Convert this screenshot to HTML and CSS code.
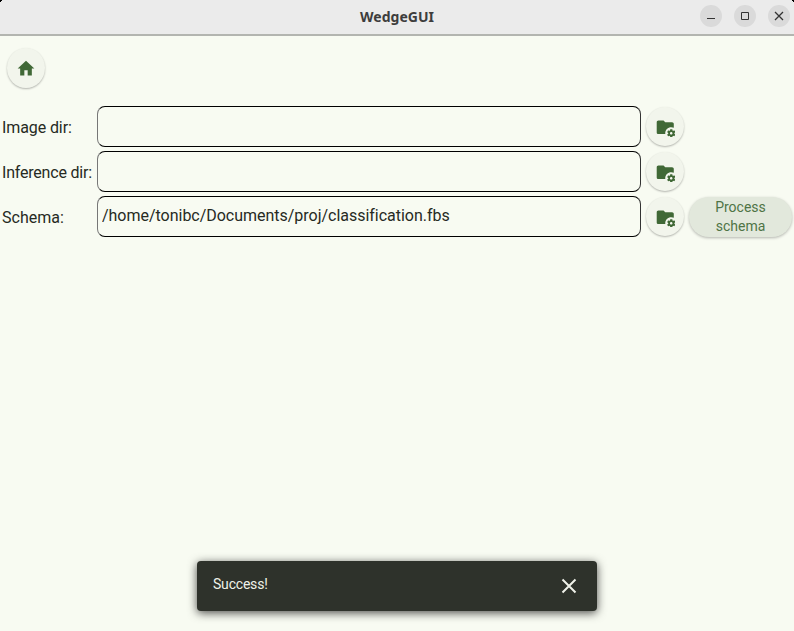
FILE: index.html
```html
<!DOCTYPE html>
<html lang="en">
<head>
<meta charset="utf-8">
<title>WedgeGUI</title>
<link rel="stylesheet" href="styles.css">
</head>
<body>
<svg width="0" height="0" class="defs" aria-hidden="true">
  <symbol id="folder-cog" viewBox="0 0 24 24"><path d="M23.8 20.4C23.9 20.4 23.9 20.5 23.8 20.6L22.8 22.3C22.7 22.4 22.6 22.4 22.5 22.4L21.3 22C21 22.2 20.8 22.3 20.5 22.5L20.3 23.8C20.3 23.9 20.2 24 20.1 24H18.1C18 24 17.9 23.9 17.8 23.8L17.6 22.5C17.3 22.4 17 22.2 16.8 22L15.6 22.5C15.5 22.5 15.4 22.5 15.3 22.4L14.3 20.7C14.2 20.6 14.3 20.5 14.4 20.4L15.5 19.6V18.6L14.4 17.8C14.3 17.7 14.3 17.6 14.3 17.5L15.3 15.8C15.4 15.7 15.5 15.7 15.6 15.7L16.8 16.2C17.1 16 17.3 15.9 17.6 15.7L17.8 14.4C17.8 14.3 17.9 14.2 18.1 14.2H20.1C20.2 14.2 20.3 14.3 20.3 14.4L20.5 15.7C20.8 15.8 21.1 16 21.4 16.2L22.6 15.7C22.7 15.7 22.9 15.7 22.9 15.8L23.9 17.5C24 17.6 23.9 17.7 23.8 17.8L22.7 18.6V19.6L23.8 20.4M20.5 19C20.5 18.2 19.8 17.5 19 17.5S17.5 18.2 17.5 19 18.2 20.5 19 20.5 20.5 19.8 20.5 19M12 19C12 15.1 15.1 12 19 12C20.1 12 21.1 12.2 22 12.7V8C22 6.9 21.1 6 20 6H12L10 4H4C2.9 4 2 4.9 2 6V18C2 19.1 2.9 20 4 20H12.1C12 19.7 12 19.3 12 19Z"/></symbol>
</svg>
<div class="window">
  <header class="titlebar">
    <h1 class="title">WedgeGUI</h1>
    <div class="controls">
      <button class="control" aria-label="Minimize"><svg viewBox="0 0 22 22"><path d="M7 13.5h8"/></svg></button>
      <button class="control" aria-label="Maximize"><svg viewBox="0 0 22 22"><path d="M7.5 7.5h7v7h-7z"/></svg></button>
      <button class="control" aria-label="Close"><svg viewBox="0 0 22 22"><path class="cross" d="M7 7l8 8M15 7l-8 8"/></svg></button>
    </div>
  </header>
  <nav class="toolbar">
    <button class="round" aria-label="Home"><svg class="home" viewBox="0 0 24 24" preserveAspectRatio="none"><path d="M10 20v-6h4v6h5v-8h3L12 3 2 12h3v8z"/></svg></button>
  </nav>
  <main class="form">
    <div class="row">
      <label class="label" for="image">Image dir:</label>
      <input class="field" id="image" type="text">
      <button class="round" aria-label="Browse"><svg class="folder"><use href="#folder-cog"/></svg></button>
    </div>
    <div class="row">
      <label class="label" for="inference">Inference dir:</label>
      <input class="field" id="inference" type="text">
      <button class="round" aria-label="Browse"><svg class="folder"><use href="#folder-cog"/></svg></button>
    </div>
    <div class="row">
      <label class="label" for="schema">Schema:</label>
      <input class="field" id="schema" type="text" value="/home/tonibc/Documents/proj/classification.fbs" spellcheck="false">
      <button class="round" aria-label="Browse"><svg class="folder"><use href="#folder-cog"/></svg></button>
      <button class="process">Process schema</button>
    </div>
  </main>
  <div class="snackbar" role="status">
    <span>Success!</span>
    <svg class="dismiss" viewBox="0 0 16 16"><path d="M1.5 1.5l13 13M14.5 1.5l-13 13"/></svg>
  </div>
</div>
</body>
</html>
```
FILE: styles.css
```css
* { box-sizing: border-box; }

body {
  margin: 0;
  background: #f8fbf2;
  color: #262a23;
  font-family: Roboto, sans-serif;
}

button { border: 0; padding: 0; font: inherit; }

.defs { display: block; }

.window {
  display: flex;
  flex-direction: column;
  height: 631px;
  overflow: hidden;
}

.titlebar {
  display: grid;
  grid-template-columns: 1fr auto 1fr;
  flex: none;
  height: 36px;
  padding: 0 4px;
  background:
    linear-gradient(135deg, #000 1.5px, transparent 1.5px),
    linear-gradient(225deg, #000 1.5px, transparent 1.5px),
    #ebebeb;
  border-bottom: 2px solid #b3b5b0;
}

.title {
  grid-column: 2;
  margin: 0;
  color: #3d3d3d;
  font: bold 14px/33px "Noto Sans", sans-serif;
}

.controls {
  display: flex;
  justify-content: flex-end;
  gap: 12px;
  padding-top: 5px;
}

.control {
  width: 22px;
  height: 22px;
  border-radius: 50%;
  background: #dadada;
}

.control svg {
  display: block;
  width: 22px;
  height: 22px;
  fill: none;
  stroke: #333;
  stroke-width: 1;
}

.control .cross { stroke-width: 1.3; }

.toolbar { padding: 12px 7px 18px; height: 70px; }

.round {
  display: flex;
  align-items: center;
  justify-content: center;
  flex: none;
  width: 38px;
  height: 40px;
  border-radius: 50%;
  background: #f2f5ec;
  box-shadow: 0 1px 2px rgba(0, 0, 0, .28);
}

.round svg { fill: #406836; }

.home { width: 20px; height: 21px; }

.folder { width: 20.5px; height: 20.5px; margin-top: 1px; }

.form {
  display: flex;
  flex-direction: column;
  gap: 4px;
  padding-left: 2px;
}

.row { display: flex; align-items: center; height: 41px; }

.row .round { height: 39px; }

.label {
  width: 95px;
  padding-top: 2px;
  font-size: 16px;
  letter-spacing: -.2px;
  white-space: nowrap;
}

.label[for="image"] { letter-spacing: -.1px; }

.label[for="schema"] { letter-spacing: 0; }

.field {
  width: 544px;
  height: 41px;
  margin-right: 5px;
  padding: 0 4px 3px;
  border: 1px solid #000;
  border-radius: 8px;
  border-left-color: #777;
  border-right-color: #333;
  background: transparent;
  color: #262a23;
  font: 16px Roboto, sans-serif;
  letter-spacing: -.02px;
}

.process {
  width: 103px;
  height: 40px;
  margin-left: 5px;
  padding: 0 20px;
  border-radius: 20px;
  background: #e2e8dc;
  color: #4f7446;
  font-size: 14px;
  line-height: 19px;
  box-shadow: 0 1px 3px rgba(0, 0, 0, .28);
}

.snackbar {
  display: flex;
  align-items: center;
  justify-content: space-between;
  width: 400px;
  height: 50px;
  margin: auto auto 20px 197px;
  padding: 0 20px 0 16px;
  border-radius: 4px;
  background: #2e322b;
  color: #eff2e9;
  font-size: 14px;
  box-shadow: 0 2px 10px rgba(0, 0, 0, .7);
}

.snackbar span { padding-bottom: 5px; letter-spacing: -.2px; }

.dismiss {
  width: 16px;
  height: 16px;
  fill: none;
  stroke: #eff2e9;
  stroke-width: 2;
}
```
